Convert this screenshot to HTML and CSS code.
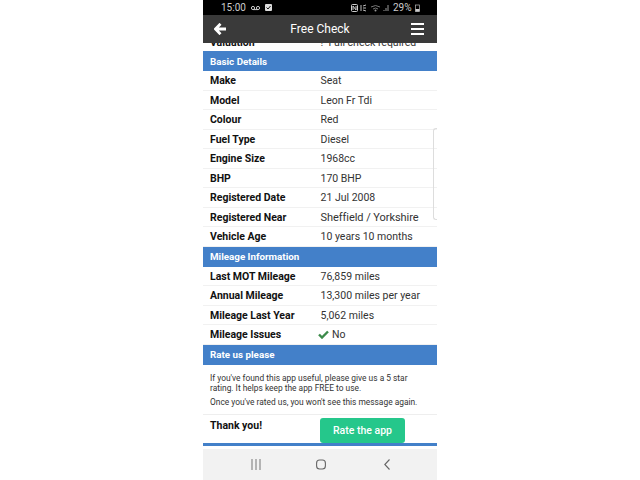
FILE: index.html
```html
<!DOCTYPE html>
<html lang="en">
<head>
<meta charset="utf-8">
<title>Free Check</title>
<link rel="stylesheet" href="styles.css">
</head>
<body>
<div class="phone">
  <div class="status">
    <div class="status-left">
      <span>15:00</span>
      <svg class="st-ic" width="9" height="6" viewBox="0 0 9 6"><circle cx="2" cy="3" r="1.6" fill="none" stroke="#ccc"/><circle cx="7" cy="3" r="1.6" fill="none" stroke="#ccc"/><path d="M2 4.6h5" stroke="#ccc"/></svg>
      <svg class="st-ic" width="7" height="7" viewBox="0 0 7 7"><rect width="7" height="7" rx="1" fill="#ddd"/><path d="M1.5 3.5l1.5 1.5 2.5-3" stroke="#111" fill="none"/></svg>
    </div>
    <div class="status-right">
      <svg width="7" height="8" viewBox="0 0 7 8"><rect x=".5" y=".5" width="6" height="7" rx="1" fill="none" stroke="#ccc"/><path d="M2 6V2l3 4V2" stroke="#ccc" fill="none"/></svg>
      <svg width="7" height="8" viewBox="0 0 7 8"><path d="M1 1v6M3 2l3-1M3 4h3M3 6l3 1" stroke="#bbb" fill="none"/></svg>
      <svg class="wifi" width="11" height="8" viewBox="0 0 11 8"><path d="M1 3q4.500-3 9 0M3 5q2.500-2 5 0" stroke="#777" fill="none"/><circle cx="5.500" cy="6.500" r="1" fill="#999"/></svg>
      <svg width="6" height="8" viewBox="0 0 6 8"><path d="M1 7V6M3 7V4M5 7V1" stroke="#999"/></svg>
      <span>29%</span>
      <svg width="5" height="8" viewBox="0 0 5 8"><rect x=".5" y="1" width="4" height="6.500" fill="none" stroke="#bbb" stroke-width=".7"/><rect x=".5" y="5" width="4" height="2.500" fill="#ccc"/></svg>
    </div>
  </div>
  <header class="appbar">
    <svg class="back" width="12" height="12" viewBox="0 0 12 12"><path d="M6.500.8L1.500 6l5 5.200M2 6H12" fill="none" stroke="#fff" stroke-width="2.800"/></svg>
    <span class="title">Free Check</span>
    <div class="burger"><i></i><i></i><i></i></div>
  </header>
  <main class="content">
    <div class="row clipped"><span class="k">Valuation</span><span class="v">! &nbsp;Full check required</span></div>
    <h2 class="band">Basic Details</h2>
    <div class="row"><span class="k">Make</span><span class="v">Seat</span></div>
    <div class="row"><span class="k">Model</span><span class="v">Leon Fr Tdi</span></div>
    <div class="row"><span class="k">Colour</span><span class="v">Red</span></div>
    <div class="row"><span class="k">Fuel Type</span><span class="v">Diesel</span></div>
    <div class="row"><span class="k">Engine Size</span><span class="v">1968cc</span></div>
    <div class="row"><span class="k">BHP</span><span class="v">170 BHP</span></div>
    <div class="row"><span class="k">Registered Date</span><span class="v">21 Jul 2008</span></div>
    <div class="row"><span class="k">Registered Near</span><span class="v v-large">Sheffield / Yorkshire</span></div>
    <div class="row"><span class="k">Vehicle Age</span><span class="v">10 years 10 months</span></div>
    <h2 class="band">Mileage Information</h2>
    <div class="row"><span class="k">Last MOT Mileage</span><span class="v">76,859 miles</span></div>
    <div class="row"><span class="k">Annual Mileage</span><span class="v">13,300 miles per year</span></div>
    <div class="row"><span class="k">Mileage Last Year</span><span class="v">5,062 miles</span></div>
    <div class="row"><span class="k">Mileage Issues</span><span class="v check"><svg width="11" height="9" viewBox="0 0 11 9"><path d="M1 4.500l3 3 6-6" fill="none" stroke="#3c8a4a" stroke-width="2.400"/></svg>No</span></div>
    <h2 class="band">Rate us please</h2>
    <div class="rate-text">
      <p>If you've found this app useful, please give us a 5 star rating. It helps keep the app FREE to use.</p>
      <p>Once you've rated us, you won't see this message again.</p>
    </div>
    <div class="rate-foot">
      <span class="thanks">Thank you!</span>
      <button class="rate-btn">Rate the app</button>
    </div>
  </main>
  <nav class="navbar">
    <svg class="nav-recent" width="10" height="11" viewBox="0 0 10 11"><path d="M1 0v11M5 0v11M9 0v11" stroke="#777" stroke-width="1"/></svg>
    <svg class="nav-home" width="10" height="11" viewBox="0 0 10 11"><rect x=".6" y="1" width="8.800" height="9" rx="3" fill="none" stroke="#666" stroke-width="1.100"/></svg>
    <svg class="nav-back" width="6" height="11" viewBox="0 0 6 11"><path d="M5.500.5L.8 5.500l4.700 5" fill="none" stroke="#666" stroke-width="1.100"/></svg>
  </nav>
  <div class="scroll-hint"></div>
</div>
</body>
</html>
```
FILE: styles.css
```css
* { box-sizing: border-box; }
html, body { margin: 0; height: 100%; background: #fff; }
body { font-family: Roboto, "Liberation Sans", sans-serif; }
.phone {
  position: relative;
  width: 234px;
  height: 480px;
  margin: 0 auto;
  display: flex;
  flex-direction: column;
  overflow: hidden;
  background: #fff;
}
.status {
  height: 15px;
  background: #000;
  color: #ccc;
  font-size: 10px;
  display: flex;
  justify-content: space-between;
  align-items: center;
  padding: 0 17px 0 18px;
}
.status-left, .status-right { display: flex; align-items: center; }
.status-left { gap: 5px; }
.status-right { gap: 2.500px; }
.status-right span { margin: 0 1px; }
.appbar {
  height: 28px;
  background: #3a3a3a;
  color: #fff;
  display: flex;
  align-items: center;
  justify-content: space-between;
  padding: 0 13px 0 11px;
}
.title { font-size: 12px; font-weight: 400; margin-left: 3px; }
.burger { display: flex; flex-direction: column; gap: 2.500px; width: 13px; }
.burger i { display: block; height: 2.500px; background: #fff; }
.content { flex: 1; min-height: 0; overflow: hidden; }
.row {
  height: 19.500px;
  display: flex;
  align-items: center;
  padding: 1px 0 0 7px;
  font-size: 10.500px;
  border-bottom: 1px solid #f1f1f1;
}
.row.clipped {
  height: 8px;
  align-items: flex-end;
  overflow: hidden;
  border: 0;
  padding-top: 0;
  line-height: 10px;
}
.clipped span { position: relative; bottom: 3.500px; }
.k { width: 110.500px; font-weight: 700; color: #111; }
.v { color: #333; }
.v-large { font-size: 11px; letter-spacing: -.05px; }
.check { display: flex; align-items: center; gap: 3px; margin-left: -2.500px; }
.band {
  margin: 0;
  height: 20px;
  display: flex;
  align-items: center;
  padding-left: 7px;
  background: #4380c9;
  color: #fff;
  font-size: 9.800px;
  font-weight: 700;
}
.rate-text {
  padding: 8.500px 7px 0;
  height: 50px;
  font-size: 8.400px;
  line-height: 10px;
  color: #333;
  border-bottom: 1px solid #eee;
}
.rate-text p { margin: 0 0 3.500px; }
.rate-foot {
  display: flex;
  align-items: flex-start;
  height: 31px;
  padding-left: 7px;
  border-bottom: 3px solid #4380c9;
}
.thanks { width: 110px; font-size: 10.500px; font-weight: 700; color: #111; padding-top: 4px; }
.rate-btn {
  width: 85px;
  height: 25px;
  margin-top: 3px;
  border: 0;
  border-radius: 3px;
  background: #25c78b;
  color: #fff;
  font: 500 10.500px Roboto, sans-serif;
  padding: 0;
}
.navbar {
  height: 31px;
  background: #f2f2f2;
  display: flex;
  align-items: center;
  padding-left: 48px;
}
.nav-home { margin-left: 55px; }
.nav-back { margin-left: 58px; }
.scroll-hint {
  position: absolute;
  right: 0;
  top: 128px;
  width: 4px;
  height: 92px;
  border: 1px solid #ddd;
  border-right: 0;
  border-radius: 3px 0 0 3px;
}
```
